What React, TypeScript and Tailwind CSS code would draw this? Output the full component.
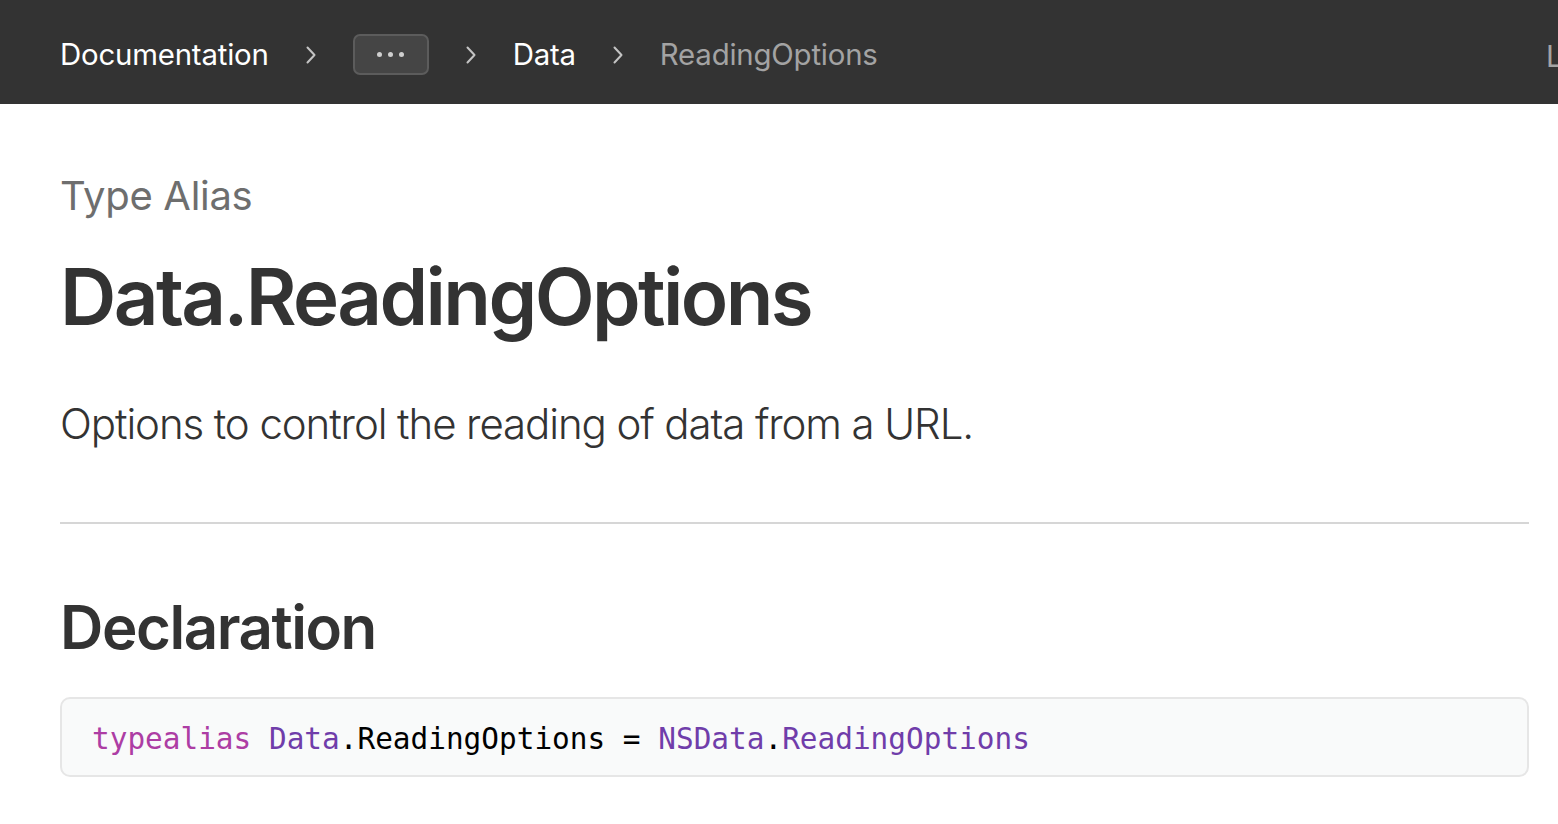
import React from "react";

function Chevron() {
  return (
    <svg width="10" height="18" viewBox="0 0 10 18" className="shrink-0">
      <path d="M1.5 1.5 L8.5 9 L1.5 16.5" fill="none" stroke="#c4c4c4" strokeWidth="2" strokeLinecap="round" strokeLinejoin="round" />
    </svg>
  );
}

export default function App() {
  return (
    <div className="min-h-screen bg-white font-['Inter','Noto_Sans',sans-serif] text-[#333333]">
      {/* Breadcrumb bar */}
      <nav className="h-[104px] bg-[#333333] flex items-center pl-[60px] pt-[6px] overflow-hidden relative">
        <div className="flex items-center text-[29.4px] leading-none tracking-[-0.2px]">
          <span className="text-white">Documentation</span>
          <span className="mx-[37px] flex"><Chevron /></span>
          <button className="-mt-[1px] w-[76px] h-[41px] rounded-[7px] border-2 border-[#5c5c5c] bg-[#454545] flex items-center justify-center gap-[6px]">
            <span className="w-[5px] h-[5px] rounded-full bg-[#cfcfcf]" />
            <span className="w-[5px] h-[5px] rounded-full bg-[#cfcfcf]" />
            <span className="w-[5px] h-[5px] rounded-full bg-[#cfcfcf]" />
          </button>
          <span className="mx-[37px] flex"><Chevron /></span>
          <span className="text-white">Data</span>
          <span className="mx-[37px] flex"><Chevron /></span>
          <span className="text-[#a3a3a3]">ReadingOptions</span>
        </div>
        <span className="absolute left-[1546px] top-[42px] text-[29.4px] leading-none text-[#a3a3a3]">Language</span>
      </nav>

      {/* Content */}
      <main className="pl-[60px] pr-[29px]">
        <div className="pt-[68px] text-[40px] leading-[48px] text-[#6e6e6e] tracking-[-0.3px]">Type Alias</div>
        <h1 className="mt-[32px] text-[78px] leading-[90px] font-semibold tracking-[-2.6px] text-[#333333]">
          Data.ReadingOptions
        </h1>
        <p className="mt-[56px] text-[42px] leading-[52px] font-light tracking-[-1.1px] text-[#333333]">
          Options to control the reading of data from a URL.
        </p>
        <div className="mt-[72px] border-t-2 border-[#d6d6d6]" />
        <h2 className="mt-[67px] text-[60px] leading-[72px] font-semibold tracking-[-1.45px] text-[#333333]">Declaration</h2>
        <div className="mt-[34px] h-[80px] rounded-[10px] border-2 border-[#e6e6e6] bg-[#f9fafa] flex items-center pl-[30px] pt-[5px]">
          <code className="font-['DejaVu_Sans_Mono',monospace] text-[29.4px] leading-none text-black whitespace-pre">
            <span className="text-[#ad3da4]">typealias</span>{" "}
            <span className="text-[#703daa]">Data</span>.ReadingOptions ={" "}
            <span className="text-[#703daa]">NSData</span>.
            <span className="text-[#703daa]">ReadingOptions</span>
          </code>
        </div>
      </main>
    </div>
  );
}
